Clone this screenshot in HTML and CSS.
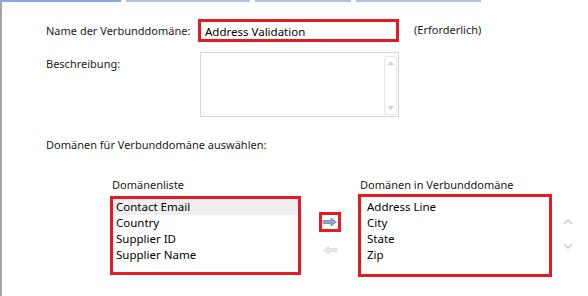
FILE: index.html
```html
<!DOCTYPE html>
<html lang="de">
<head>
<meta charset="utf-8">
<title>Verbunddomäne</title>
<link rel="stylesheet" href="styles.css">
</head>
<body>
<div class="tabs">
  <span class="tab tab-active"></span>
  <span class="tab tab-2"></span>
  <span class="tab tab-3"></span>
  <span class="tab tab-4"></span>
</div>
<div class="panel">
  <div class="row row-name">
    <label class="label">Name der Verbunddomäne:</label>
    <div class="name-box">Address Validation</div>
    <span class="required">(Erforderlich)</span>
  </div>
  <div class="row row-desc">
    <label class="label label-desc">Beschreibung:</label>
    <div class="desc-box">
      <div class="vscroll">
        <svg width="6" height="4" viewBox="0 0 6 4"><path d="M0 4 L3 0 L6 4 Z" fill="#d0d0d0"/></svg>
        <svg width="6" height="4" viewBox="0 0 6 4"><path d="M0 0 L3 4 L6 0 Z" fill="#d0d0d0"/></svg>
      </div>
    </div>
  </div>
  <div class="section-title">Domänen für Verbunddomäne auswählen:</div>
  <div class="lists">
    <div class="list-col list-left">
      <div class="list-title">Domänenliste</div>
      <div class="list-box">
        <div class="item item-selected">Contact Email</div>
        <div class="item">Country</div>
        <div class="item">Supplier ID</div>
        <div class="item">Supplier Name</div>
      </div>
    </div>
    <div class="move-col">
      <div class="move-btn move-active">
        <svg width="16" height="10" viewBox="0 0 16 10">
          <path d="M1 3.5 H9 V1 L14.5 5 L9 9 V6.5 H1 Z" fill="#8ea6c8" stroke="#6f86a8" stroke-width="0.8"/>
        </svg>
      </div>
      <div class="move-btn move-disabled">
        <svg width="16" height="10" viewBox="0 0 16 10">
          <path d="M15 3.5 H7 V1 L1.5 5 L7 9 V6.5 H15 Z" fill="#e4e8ee" stroke="#d8dce2" stroke-width="0.8"/>
        </svg>
      </div>
    </div>
    <div class="list-col list-right">
      <div class="list-title">Domänen in Verbunddomäne</div>
      <div class="list-box list-box-right">
        <div class="item">Address Line</div>
        <div class="item">City</div>
        <div class="item">State</div>
        <div class="item">Zip</div>
      </div>
    </div>
    <div class="order-col">
      <svg width="10" height="7" viewBox="0 0 10 7"><path d="M1 6 L5 2 L9 6" fill="none" stroke="#cfcfcf" stroke-width="1.6"/></svg>
      <svg width="10" height="7" viewBox="0 0 10 7"><path d="M1 1 L5 5 L9 1" fill="none" stroke="#cfcfcf" stroke-width="1.6"/></svg>
    </div>
  </div>
</div>
</body>
</html>
```
FILE: styles.css
```css
html, body {
  margin: 0;
  padding: 0;
  background: #ffffff;
}
body {
  width: 588px;
  height: 296px;
  overflow: hidden;
  font-family: "Noto Sans", "Open Sans", sans-serif;
  font-size: 11px;
  color: #1a1a1a;
}
.tabs {
  display: flex;
  height: 2px;
}
.tab {
  height: 2px;
  background: #b4c2de;
}
.tab-active { width: 121px; background: #86a6e2; }
.tab-2 { width: 124px; margin-left: 5px; }
.tab-3 { width: 96px; margin-left: 5px; }
.tab-4 { width: 125px; margin-left: 5px; }
.panel {
  border-left: 2px solid #a4a4a4;
  height: 294px;
  box-sizing: border-box;
  padding-left: 44px;
}
.row {
  display: flex;
}
.row-name {
  padding-top: 17px;
  align-items: center;
  height: 23px;
}
.label {
  width: 152px;
  flex: none;
}
.name-box {
  width: 191px;
  height: 17px;
  border: 3px solid #e31b23;
  padding-left: 4px;
  line-height: 19px;
  font-size: 11.5px;
  color: #000;
  box-sizing: content-box;
}
.required {
  margin-left: 15px;
  margin-top: -3px;
}
.row-desc {
  margin-top: 10px;
}
.label-desc {
  padding-top: 4px;
  width: 154px;
}
.desc-box {
  width: 199px;
  height: 65px;
  border: 1px solid #d6d6d6;
  display: flex;
  justify-content: flex-end;
  padding: 3px 1px 1px 0;
  box-sizing: border-box;
}
.vscroll {
  width: 11px;
  border: 1px solid #e6e6e6;
  border-radius: 2px;
  display: flex;
  flex-direction: column;
  justify-content: space-between;
  align-items: center;
  padding: 4px 0;
}
.vscroll svg { display: block; }
.section-title {
  margin-top: 20px;
  line-height: 16px;
}
.lists {
  display: flex;
  margin-top: 24px;
  padding-left: 64px;
}
.list-title {
  line-height: 16px;
  height: 16px;
  padding-left: 2px;
}
.list-box {
  width: 185px;
  height: 73px;
  border: 3px solid #e31b23;
  margin-top: 3px;
}
.list-box-right {
  width: 185px;
  height: 75px;
  margin-top: 1px;
  padding-top: 2px;
  padding-left: 3px;
}
.item {
  line-height: 16px;
  height: 16px;
  padding-left: 3px;
  font-size: 11.5px;
  color: #000;
}
.item-selected {
  background: #efefef;
}
.move-col {
  width: 57px;
  display: flex;
  flex-direction: column;
  align-items: center;
  padding-top: 35px;
}
.move-btn {
  width: 16px;
  height: 14px;
  display: flex;
  align-items: center;
  justify-content: center;
}
.move-active {
  border: 3px solid #e31b23;
}
.move-disabled {
  margin-top: 11px;
}
.order-col {
  display: flex;
  flex-direction: column;
  align-items: center;
  padding-top: 41px;
  margin-left: 11px;
  gap: 18px;
}
.order-col svg { display: block; }
```
